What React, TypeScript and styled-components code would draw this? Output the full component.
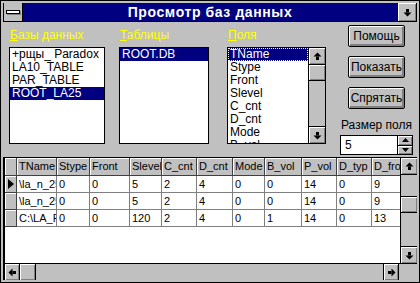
import styled, { createGlobalStyle } from "styled-components";

const GlobalStyle = createGlobalStyle`
  html, body {
    margin: 0;
    padding: 0;
    background: #c0c0c0;
  }
  body {
    font-family: "Liberation Sans", Arial, sans-serif;
    font-size: 12px;
    color: #000;
  }
`;

type Dir = "up" | "down" | "left" | "right";

const rotation: Record<Dir, number> = { up: 0, right: 90, down: 180, left: 270 };

// стрелка полосы прокрутки (голова + ножка)
const ScrollArrow = ({ dir }: { dir: Dir }) => (
  <svg width="9" height="9" viewBox="0 0 9 9" style={{ transform: `rotate(${rotation[dir]}deg)` }}>
    <polygon points="4.5,0.5 8.5,4.5 0.5,4.5" fill="#000" />
    <rect x="3" y="4.5" width="3" height="3.5" fill="#000" />
  </svg>
);

const Triangle = ({ dir }: { dir: Dir }) => (
  <svg width="7" height="4" viewBox="0 0 7 4" style={{ transform: `rotate(${rotation[dir]}deg)` }}>
    <polygon points="3.5,0 7,4 0,4" fill="#000" />
  </svg>
);

const databases = ["+рщы_ Paradox", "LA10_TABLE", "PAR_TABLE", "ROOT_LA25"];
const tables = ["ROOT.DB"];
const fields = ["TName", "Stype", "Front", "Slevel", "C_cnt", "D_cnt", "Mode", "B_vol"];

const columns = [
  { name: "TName", width: 40 },
  { name: "Stype", width: 33 },
  { name: "Front", width: 40 },
  { name: "Slevel", width: 32 },
  { name: "C_cnt", width: 35 },
  { name: "D_cnt", width: 36 },
  { name: "Mode", width: 32 },
  { name: "B_vol", width: 37 },
  { name: "P_vol", width: 35 },
  { name: "D_typ", width: 35 },
  { name: "D_fro", width: 40 },
];

const rows = [
  ["\\la_n_25", "0", "0", "5", "2", "4", "0", "0", "14", "0", "9"],
  ["\\la_n_25", "0", "0", "5", "2", "4", "0", "0", "14", "0", "9"],
  ["C:\\LA_ROOT", "0", "0", "120", "2", "4", "0", "1", "14", "0", "13"],
];

const App = () => {
  return (
    <>
      <GlobalStyle />
      <Window>
        <TitleBar>
          <SysBox>
            <SysBar />
          </SysBox>
          <Caption>Просмотр баз данных</Caption>
          <DropBox>
            <ScrollArrow dir="down" />
          </DropBox>
        </TitleBar>

        <TopPanel>
          <Group $width={96} $gap={0}>
            <GroupLabel>
              <Hotkey>Б</Hotkey>азы данных
            </GroupLabel>
            <ListBox>
              <ListItems>
                {databases.map((d) => (
                  <ListItem key={d} $selected={d === "ROOT_LA25"}>
                    {d}
                  </ListItem>
                ))}
              </ListItems>
            </ListBox>
          </Group>

          <Group $width={90} $gap={14}>
            <GroupLabel>
              <Hotkey>Т</Hotkey>аблицы
            </GroupLabel>
            <ListBox>
              <ListItems>
                {tables.map((t) => (
                  <ListItem key={t} $selected>
                    {t}
                  </ListItem>
                ))}
              </ListItems>
            </ListBox>
          </Group>

          <Group $width={99} $gap={18}>
            <GroupLabel>
              <Hotkey>П</Hotkey>оля
            </GroupLabel>
            <ListBox>
              <ListItems>
                {fields.map((f, i) => (
                  <ListItem key={f} $selected={i === 0} $focused={i === 0}>
                    {f}
                  </ListItem>
                ))}
              </ListItems>
              <ListScroll>
                <ScrollButton $edge="top">
                  <ScrollArrow dir="up" />
                </ScrollButton>
                <ListThumb />
                <ScrollButton $edge="bottom">
                  <ScrollArrow dir="down" />
                </ScrollButton>
              </ListScroll>
            </ListBox>
          </Group>

          <ButtonColumn>
            <PushButton>Помощь</PushButton>
            <PushButton>Показать</PushButton>
            <PushButton>Спрятать</PushButton>
            <SpinLabel>Размер поля</SpinLabel>
            <SpinBox>
              <SpinInput>5</SpinInput>
              <SpinButtons>
                <SpinButton>
                  <Triangle dir="up" />
                </SpinButton>
                <SpinButton>
                  <Triangle dir="down" />
                </SpinButton>
              </SpinButtons>
            </SpinBox>
          </ButtonColumn>
        </TopPanel>

        <DataGrid>
          <GridMain>
            <GridTable>
              <GridRow $header>
                <IndicatorCell $header />
                {columns.map((c) => (
                  <HeaderCell key={c.name} $width={c.width}>
                    {c.name}
                  </HeaderCell>
                ))}
              </GridRow>
              {rows.map((r, ri) => (
                <GridRow key={ri}>
                  <IndicatorCell>
                    {ri === 0 && (
                      <svg width="6" height="10" viewBox="0 0 6 10">
                        <polygon points="0,0 6,5 0,10" fill="#000" />
                      </svg>
                    )}
                  </IndicatorCell>
                  {r.map((v, ci) => (
                    <Cell key={ci} $width={columns[ci].width}>
                      {v}
                    </Cell>
                  ))}
                </GridRow>
              ))}
            </GridTable>
            <VScroll>
              <ScrollButton $edge="top">
                <ScrollArrow dir="up" />
              </ScrollButton>
              <VThumb />
              <ScrollButton $edge="bottom">
                <ScrollArrow dir="down" />
              </ScrollButton>
            </VScroll>
          </GridMain>
          <HScroll>
            <HButton $side="left">
              <ScrollArrow dir="left" />
            </HButton>
            <HThumb />
            <HTrack />
            <HButton $side="right">
              <ScrollArrow dir="right" />
            </HButton>
            <Corner />
          </HScroll>
        </DataGrid>
      </Window>
    </>
  );
};

export default App;

const raised = `
  background: #c0c0c0;
  box-shadow: inset 1px 1px #fff, inset -1px -1px #808080;
`;

const Window = styled.div`
  width: 420px;
  height: 283px;
  box-sizing: border-box;
  border: 1px solid #000;
  padding: 2px;
  background: #c0c0c0;
  display: flex;
  flex-direction: column;
`;

const TitleBar = styled.div`
  display: flex;
  height: 19px;
  flex-shrink: 0;
  box-sizing: border-box;
  border: 1px solid #000;
  border-top: none;
`;

const SysBox = styled.div`
  width: 19px;
  box-sizing: border-box;
  border-right: 1px solid #000;
  background: #c0c0c0;
  display: flex;
  align-items: center;
  justify-content: center;
`;

const SysBar = styled.div`
  width: 12px;
  height: 2px;
  background: #fff;
  border: 1px solid #000;
  box-shadow: 1px 1px #808080;
`;

const Caption = styled.div`
  flex: 1;
  background: #000080;
  color: #fff;
  font-weight: bold;
  font-size: 14px;
  letter-spacing: 0.6px;
  line-height: 18px;
  text-align: center;
`;

const DropBox = styled.div`
  width: 19px;
  box-sizing: border-box;
  border-left: 1px solid #000;
  ${raised}
  display: flex;
  align-items: center;
  justify-content: center;
`;

const TopPanel = styled.div`
  display: flex;
  height: 135px;
  flex-shrink: 0;
  padding-left: 6px;
`;

const Group = styled.div<{ $width: number; $gap: number }>`
  width: ${(p) => p.$width}px;
  margin-left: ${(p) => p.$gap}px;
  display: flex;
  flex-direction: column;
`;

const GroupLabel = styled.div`
  height: 25px;
  box-sizing: border-box;
  padding: 6px 0 0 1px;
  line-height: 14px;
  color: #ffff00;
`;

const Hotkey = styled.span`
  text-decoration: underline;
`;

const ListBox = styled.div`
  height: 97px;
  box-sizing: border-box;
  border: 1px solid #000;
  background: #fff;
  display: flex;
  overflow: hidden;
`;

const ListItems = styled.div`
  flex: 1;
  min-width: 0;
  overflow: hidden;
`;

const ListItem = styled.div<{ $selected?: boolean; $focused?: boolean }>`
  height: 13px;
  line-height: 13px;
  padding-left: 2px;
  white-space: nowrap;
  background: ${(p) => (p.$selected ? "#000080" : "transparent")};
  color: ${(p) => (p.$selected ? "#fff" : "#000")};
  outline: ${(p) => (p.$focused ? "1px dotted #fff" : "none")};
  outline-offset: -1px;
`;

const ListScroll = styled.div`
  width: 16px;
  flex-shrink: 0;
  border-left: 1px solid #000;
  background: #c0c0c0;
  display: flex;
  flex-direction: column;
`;

const ScrollButton = styled.div<{ $edge: "top" | "bottom" }>`
  height: 17px;
  flex-shrink: 0;
  box-sizing: border-box;
  ${raised}
  ${(p) => (p.$edge === "top" ? "border-bottom: 1px solid #000;" : "border-top: 1px solid #000; margin-top: auto;")}
  display: flex;
  align-items: center;
  justify-content: center;
`;

const ListThumb = styled.div`
  height: 16px;
  box-sizing: border-box;
  border-bottom: 1px solid #000;
  ${raised}
`;

const ButtonColumn = styled.div`
  width: 73px;
  margin-left: 14px;
  padding-top: 3px;
  display: flex;
  flex-direction: column;
  align-items: center;
`;

const PushButton = styled.div`
  width: 57px;
  height: 22px;
  box-sizing: border-box;
  margin-bottom: 9px;
  border: 1px solid #000;
  border-radius: 2px;
  background: #c0c0c0;
  box-shadow: inset 1px 1px #fff, inset -2px -2px #808080;
  line-height: 20px;
  text-align: center;
`;

const SpinLabel = styled.div`
  line-height: 14px;
  white-space: nowrap;
`;

const SpinBox = styled.div`
  margin-top: 3px;
  width: 73px;
  height: 20px;
  display: flex;
`;

const SpinInput = styled.div`
  flex: 1;
  box-sizing: border-box;
  border: 1px solid #000;
  background: #fff;
  padding-left: 4px;
  line-height: 18px;
`;

const SpinButtons = styled.div`
  width: 15px;
  box-sizing: border-box;
  border: 1px solid #000;
  border-left: none;
  display: flex;
  flex-direction: column;
`;

const SpinButton = styled.div`
  flex: 1;
  ${raised}
  display: flex;
  align-items: center;
  justify-content: center;
  & + & {
    border-top: 1px solid #000;
  }
`;

const DataGrid = styled.div`
  flex: 1;
  min-height: 0;
  display: flex;
  flex-direction: column;
  border-top: 1px solid #000;
  border-left: 2px solid #000;
  background: #fff;
  font-size: 11px;
`;

const GridMain = styled.div`
  flex: 1;
  min-height: 0;
  display: flex;
`;

const GridTable = styled.div`
  flex: 1;
  min-width: 0;
  overflow: hidden;
  background: #fff;
`;

const GridRow = styled.div<{ $header?: boolean }>`
  display: flex;
  height: ${(p) => (p.$header ? 18 : 17)}px;
`;

const Cell = styled.div<{ $width: number }>`
  width: ${(p) => p.$width}px;
  flex-shrink: 0;
  box-sizing: border-box;
  border-right: 1px solid #808080;
  border-bottom: 1px solid #808080;
  padding-left: 2px;
  line-height: 16px;
  white-space: nowrap;
  overflow: hidden;
`;

const HeaderCell = styled(Cell)`
  background: #c0c0c0;
  border-right-color: #404040;
  border-bottom-color: #404040;
  box-shadow: inset 1px 1px #fff;
  line-height: 17px;
`;

const IndicatorCell = styled.div<{ $header?: boolean }>`
  width: 12px;
  flex-shrink: 0;
  box-sizing: border-box;
  background: #c0c0c0;
  border-right: 1px solid #404040;
  border-bottom: 1px solid #404040;
  box-shadow: inset 1px 1px #fff;
  display: flex;
  align-items: center;
  padding-left: 3px;
`;

const VScroll = styled.div`
  width: 17px;
  flex-shrink: 0;
  box-sizing: border-box;
  border-left: 1px solid #000;
  background: #c0c0c0;
  display: flex;
  flex-direction: column;
`;

const VThumb = styled.div`
  height: 17px;
  margin-top: auto;
  margin-bottom: 12px;
  box-sizing: border-box;
  border-top: 1px solid #000;
  border-bottom: 1px solid #000;
  ${raised}
`;

const HScroll = styled.div`
  height: 16px;
  flex-shrink: 0;
  display: flex;
  border-top: 1px solid #000;
  background: #c0c0c0;
`;

const HButton = styled.div<{ $side: "left" | "right" }>`
  width: 15px;
  box-sizing: border-box;
  ${raised}
  ${(p) => (p.$side === "left" ? "border-right: 1px solid #000;" : "border-left: 1px solid #000;")}
  display: flex;
  align-items: center;
  justify-content: center;
`;

const HThumb = styled.div`
  width: 16px;
  box-sizing: border-box;
  border-right: 1px solid #000;
  ${raised}
`;

const HTrack = styled.div`
  flex: 1;
  background: #c0c0c0;
`;

const Corner = styled.div`
  width: 19px;
  box-sizing: border-box;
  border-left: 1px solid #000;
  background: #c0c0c0;
`;
